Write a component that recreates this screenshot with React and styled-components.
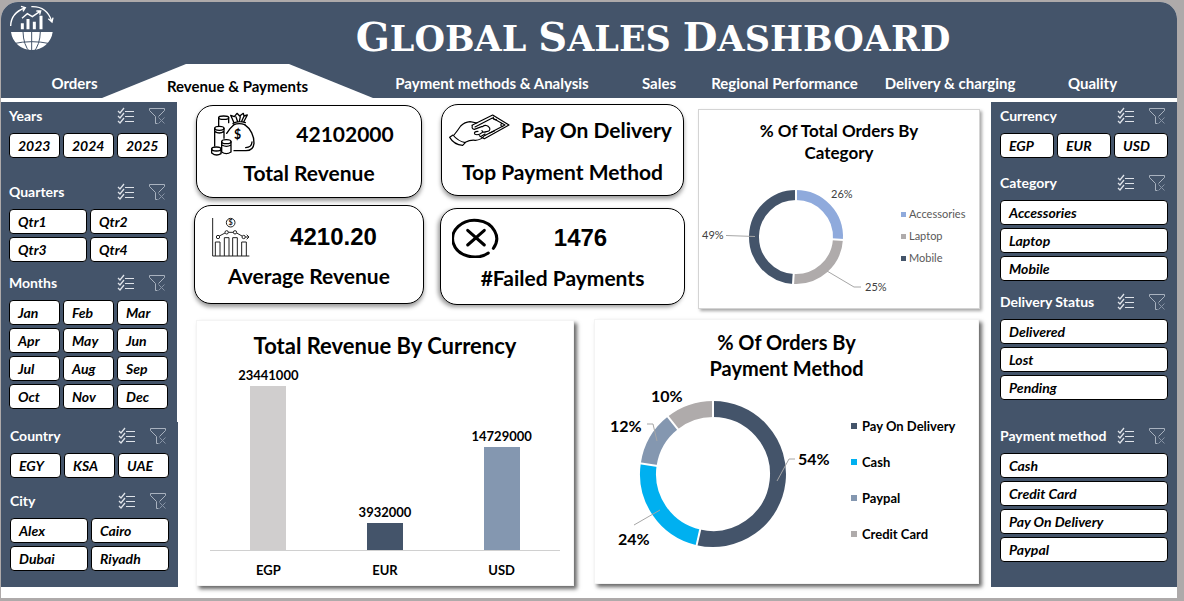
import React from "react";
import styled, { createGlobalStyle } from "styled-components";

const NAVY = "#44546a";

const GlobalStyle = createGlobalStyle`
  * { box-sizing: border-box; }
  body { margin: 0; background: #aeaaaa; font-family: Lato, "Open Sans", sans-serif; color: #000; }
  h1, h2, h3, p, ul, dl, dd, dt { margin: 0; padding: 0; }
  button { font-family: inherit; }
`;

const Page = styled.div`
  padding: 2px 7px 3px 1px;
`;

const Sheet = styled.div`
  background: #fff;
  border-radius: 17px 17px 0 0;
  overflow: hidden;
`;

/* ---------- header ---------- */

const Header = styled.header`
  background: ${NAVY};
  color: #fff;
`;

const TitleBar = styled.div`
  display: flex;
  height: 62px;
`;

const Brand = styled.div`
  width: 128px;
  padding: 3px 0 0 8px;
  svg { display: block; }
`;

const Title = styled.h1`
  flex: 1;
  display: flex;
  justify-content: center;
  gap: 12px;
  padding-top: 11px;
  font: bold 35px/48px "DejaVu Serif", serif;
  text-transform: uppercase;
`;

const TitleWord = styled.span`
  display: block;
  &::first-letter { font-size: 40px; }
`;

const Nav = styled.nav`
  display: grid;
  grid-template-columns: 55fr 271fr 238fr 96fr 155fr 176fr 109fr;
  height: 34px;
  padding: 0 30px 0 46px;
`;

const Tab = styled.a`
  display: flex;
  justify-content: center;
  padding-top: ${(p) => (p.$active ? 13 : 10)}px;
  font-size: 15px;
  line-height: 18px;
  font-weight: bold;
  white-space: nowrap;
  text-decoration: none;
  color: ${(p) => (p.$active ? "#000" : "#fff")};
  background: ${(p) => (p.$active ? "#fff" : "transparent")};
  clip-path: ${(p) => (p.$active ? "polygon(31% 0, 69% 0, 100% 100%, 0 100%)" : "none")};
`;

/* ---------- body ---------- */

const Body = styled.div`
  display: grid;
  grid-template-columns: 177px 1fr 186px;
  padding-bottom: 11px;
`;

const Sidebar = styled.aside`
  display: flex;
  flex-direction: column;
  padding-top: 4px;
`;

const Panel = styled.div`
  flex: ${(p) => (p.$grow ? 1 : "none")};
  margin-right: ${(p) => p.$edge || 0}px;
  padding: ${(p) => p.$pad};
  background: ${NAVY};
`;

const SlicerBox = styled.section`
  margin-top: ${(p) => p.$space}px;
`;

const SlicerHead = styled.div`
  display: flex;
  align-items: center;
  height: 28px;
  margin-bottom: 3px;
  padding-right: 2px;
  color: #fff;
`;

const SlicerTitle = styled.h2`
  flex: 1;
  font-size: 14px;
  line-height: 18px;
  font-weight: bold;
  white-space: nowrap;
`;

const IconButton = styled.button`
  display: block;
  width: 18px;
  height: 18px;
  padding: 0;
  margin-left: ${(p) => p.$space || 0}px;
  border: 0;
  background: none;
  svg { display: block; }
`;

const Options = styled.div`
  display: grid;
  grid-template-columns: repeat(${(p) => p.$cols}, 1fr);
  gap: 3px;
`;

const Option = styled.button`
  height: 25px;
  padding: 0 0 0 8px;
  border: 1px solid #000;
  border-radius: 4px;
  background: #fff;
  color: #000;
  font-size: 14px;
  line-height: 18px;
  font-weight: bold;
  font-style: italic;
  text-align: left;
  white-space: nowrap;
`;

const Main = styled.main`
  padding: 6px 11px 0 16px;
`;

const TopRow = styled.div`
  display: grid;
  grid-template-columns: 233fr 245fr 282fr;
  column-gap: 13px;
  align-items: start;
`;

const KpiColumn = styled.div`
  display: grid;
  gap: ${(p) => p.$gap}px;
  padding: ${(p) => p.$pad};
`;

const KpiCard = styled.section`
  height: ${(p) => p.$height}px;
  margin: 0 ${(p) => p.$inset || 0}px;
  padding-top: ${(p) => p.$top}px;
  border: 1px solid #000;
  border-radius: 17px;
  background: #fff;
  box-shadow: ${(p) => (p.$left ? "-2px 2px 4px" : "0 3px 4px")} rgba(0, 0, 0, 0.4);
`;

const KpiRow = styled.div`
  display: flex;
  align-items: center;
  gap: ${(p) => p.$gap || 0}px;
  height: 44px;
  padding: ${(p) => p.$pad};
  svg { flex: none; display: block; }
`;

const KpiValue = styled.p`
  flex: 1;
  text-align: center;
  font-size: ${(p) => (p.$kind === "arial" ? 24 : 21)}px;
  font-family: ${(p) => (p.$kind === "arial" ? '"Liberation Sans", sans-serif' : "inherit")};
  line-height: 28px;
  font-weight: bold;
  white-space: nowrap;
`;

const KpiLabel = styled.h2`
  margin-top: ${(p) => p.$space}px;
  text-align: center;
  font-size: 21px;
  line-height: 24px;
  font-weight: bold;
  white-space: nowrap;
`;

const ChartCard = styled.section`
  height: ${(p) => p.$height}px;
  margin-top: ${(p) => p.$space || 0}px;
  padding-top: ${(p) => p.$top}px;
  border: 1px solid ${(p) => (p.$line ? "#d4d4d4" : "#f4f4f4")};
  background: #fff;
  box-shadow: ${(p) => (p.$line ? "2px 2px 3px rgba(0,0,0,.35)" : "3px 3px 4px rgba(0,0,0,.6)")};
`;

const ChartTitle = styled.h2`
  text-align: center;
  font-size: ${(p) => p.$size}px;
  line-height: ${(p) => p.$line}px;
  font-weight: bold;
`;

const Plot = styled.div`
  display: flex;
  svg { flex: none; display: block; font-family: Lato, sans-serif; }
`;

const Legend = styled.ul`
  list-style: none;
  padding-top: ${(p) => p.$top}px;
  color: ${(p) => (p.$strong ? "#000" : "#595959")};
  font-size: ${(p) => (p.$strong ? 13 : 11)}px;
  font-weight: ${(p) => (p.$strong ? "bold" : "normal")};
  line-height: ${(p) => p.$line}px;
`;

const LegendItem = styled.li`
  display: flex;
  align-items: center;
  gap: ${(p) => (p.$strong ? 5 : 3)}px;
  white-space: nowrap;
  &::before {
    content: "";
    width: ${(p) => (p.$strong ? 6 : 5)}px;
    height: ${(p) => (p.$strong ? 6 : 5)}px;
    background: ${(p) => p.$color};
  }
`;

const BottomRow = styled.div`
  display: grid;
  grid-template-columns: 378fr 385fr;
  column-gap: 20px;
  padding: 0 1px 0 2px;
  margin-top: 10px;
  align-items: start;
`;

const Bars = styled.div`
  display: grid;
  grid-template-columns: repeat(3, 1fr);
  height: 191px;
  margin: 0 13px;
  border-bottom: 1px solid #d0d0d0;
`;

const BarColumn = styled.div`
  display: flex;
  flex-direction: column;
  align-items: center;
  justify-content: flex-end;
  font-size: 13px;
  line-height: 18px;
  font-weight: bold;
`;

const Bar = styled.div`
  width: 36px;
  margin-top: 2px;
  background: ${(p) => p.$color};
`;

const BarNames = styled.div`
  display: grid;
  grid-template-columns: repeat(3, 1fr);
  margin: 10px 13px 0;
  text-align: center;
  font-size: 13px;
  line-height: 18px;
  font-weight: bold;
`;

/* ---------- drawings ---------- */

const GlobeLogo = () => (
  <svg width="46" height="48" viewBox="27 15 138 144" fill="none" stroke="#fff" strokeWidth="4">
    <path d="M33 96H158A63 62 0 0 1 33 96Z" fill="#fff" stroke="none" />
    <path d="M95 95V158M69 95Q70 135 90 157M121 95Q120 135 100 157M40 131Q95 119 150 131" stroke={NAVY} strokeWidth="3" />
    <path d="M67 88V70M84 88V57M103 88V65M123 88V47" strokeWidth="9" />
    <path d="M66 55L82 41L97 50L119 35M109 33L122 33L119 44" />
    <path d="M32 78Q33 39 74 24M63 19L76 23L69 34M94 20Q140 18 155 63M145 56L156 66L159 53" />
  </svg>
);

const SelectIcon = () => (
  <svg width="18" height="18" viewBox="0 0 18 18" fill="none" stroke="#dfe3e9" strokeWidth="1">
    <path d="M1 4L3 6L7 1M1 9L3 11L7 6M1 14L3 16L7 11" strokeWidth="1.300" />
    <path d="M8 4.500H17M8 9.500H17M8 14.500H17" />
  </svg>
);

const ClearIcon = () => (
  <svg width="18" height="18" viewBox="0 0 18 18" fill="none" stroke="#a9b2bf" strokeWidth="1">
    <path d="M1.500 1.500H16.500V3.500L10.500 9.500M1.500 1.500V3.500L7.500 9.500V16.500H9.500" />
    <path d="M10.500 10.500L16.500 16.500M16.500 10.500L10.500 16.500" stroke="#8793a5" />
  </svg>
);

const MoneyBagIcon = () => (
  <svg width="44" height="44" viewBox="65 34 132 132" fill="none" stroke="#000" strokeWidth="4" strokeLinecap="round" strokeLinejoin="round">
    <ellipse cx="103" cy="51" rx="15" ry="5" />
    <path d="M88 51V75M118 51V66" />
    <ellipse cx="90" cy="83" rx="14" ry="6" />
    <path d="M76 83V136M104 83V113M76 92Q90 102 104 92" />
    <ellipse cx="111" cy="123" rx="14" ry="6" />
    <path d="M97 123V154Q111 164 125 154V123M98 133Q111 141 125 133" />
    <ellipse cx="81" cy="145" rx="14" ry="6" />
    <path d="M67 145V157Q81 168 95 159V145" />
    <path d="M133 73Q120 84 112 98M166 72C184 84 195 107 194 128Q192 150 170 150H134" />
    <path d="M131 68Q148 59 168 66M132 73Q149 65 166 72M134 66L124 44L135 48L143 38L151 46L162 38L164 46L174 43L163 64M140 49L145 63M153 48L150 62M164 47L157 62" />
    <path d="M188 124Q187 140 169 141" />
    <text x="145" y="116" textAnchor="middle" fontFamily="Lato" fontSize="37" fill="#000" stroke="none" fontWeight="bold">$</text>
  </svg>
);

const TrendIcon = () => (
  <svg width="38" height="40" viewBox="65 350 114 120" fill="none" stroke="#222" strokeWidth="3">
    <path d="M67 353V467H177M75 467V425H89V467M102 467V412H116V467M127 467V412H141V467M154 467V425H168V467" />
    <circle cx="83" cy="410" r="5" />
    <circle cx="109" cy="396" r="5" />
    <circle cx="134" cy="396" r="5" />
    <circle cx="160" cy="410" r="5" />
    <path d="M87 407L104 398M114 396H129M139 398L155 407M165 410H175M169 403L176 410L169 417" />
    <circle cx="121" cy="367" r="13" />
    <text x="121" y="375" textAnchor="middle" fontFamily="Lato" fontSize="22" fill="#222" stroke="none" fontWeight="bold">$</text>
  </svg>
);

const HandCashIcon = () => (
  <svg width="61" height="33" viewBox="41 38 183 99" fill="none" stroke="#000" strokeWidth="3.500" strokeLinejoin="round" strokeLinecap="round">
    <path d="M43 108L53 101Q67 119 90 124L82 132Q56 130 43 108Z" />
    <path d="M56 101Q68 86 76 74Q88 62 104 61L125 65M90 123Q105 115 120 117Q138 116 149 101" />
    <path d="M110 72L172 41L221 71L147 112L132 103M119 77L171 50L209 71L150 102" />
    <path d="M111 73Q108 83 117 84L139 76M128 90Q113 91 119 99Q129 103 141 93M141 76Q154 67 163 80Q166 90 153 91Q142 95 140 88M174 47Q173 57 183 54M199 66Q193 73 202 76M163 95L177 89M139 104L149 98" />
  </svg>
);

const FailedIcon = () => (
  <svg width="48" height="40" viewBox="48 356 144 120" fill="none" stroke="#000" strokeWidth="9" strokeLinecap="round">
    <path d="M157 461A66 55 0 1 1 172 447" />
    <path d="M95 393L145 437M145 393L95 437" />
  </svg>
);

const point = (cx, cy, r, share) => {
  const a = share * 2 * Math.PI;
  return [cx + r * Math.sin(a), cy - r * Math.cos(a)];
};

function Ring({ cx, cy, inner, outer, slices }) {
  let total = 0;
  const mid = (inner + outer) / 2;
  const parts = slices.map((s) => {
    const from = total;
    total += s.share;
    return { ...s, from, to: total };
  });
  return (
    <g fill="none">
      {parts.map((s) => (
        <path
          key={s.name}
          d={`M${point(cx, cy, mid, s.from)}A${mid} ${mid} 0 ${s.share > 0.5 ? 1 : 0} 1 ${point(cx, cy, mid, s.to)}`}
          stroke={s.color}
          strokeWidth={outer - inner}
        />
      ))}
      {parts.map((s) => (
        <path
          key={s.name}
          d={`M${point(cx, cy, inner - 1, s.from)}L${point(cx, cy, outer + 1, s.from)}`}
          stroke="#fff"
          strokeWidth="2"
        />
      ))}
    </g>
  );
}

/* ---------- data ---------- */

const tabs = [
  "Orders",
  "Revenue & Payments",
  "Payment methods & Analysis",
  "Sales",
  "Regional Performance",
  "Delivery & charging",
  "Quality",
];

const categories = [
  { name: "Accessories", share: 0.26, color: "#8faadc" },
  { name: "Laptop", share: 0.25, color: "#afabab" },
  { name: "Mobile", share: 0.49, color: NAVY },
];

const methods = [
  { name: "Pay On Delivery", share: 0.536, color: NAVY },
  { name: "Cash", share: 0.237, color: "#00b0f0" },
  { name: "Paypal", share: 0.121, color: "#8497b0" },
  { name: "Credit Card", share: 0.106, color: "#afabab" },
];

const revenue = [
  { name: "EGP", value: 23441000, color: "#d0cece" },
  { name: "EUR", value: 3932000, color: NAVY },
  { name: "USD", value: 14729000, color: "#8497b0" },
];

const months = ["Jan", "Feb", "Mar", "Apr", "May", "Jun", "Jul", "Aug", "Sep", "Oct", "Nov", "Dec"];

function Slicer({ title, items, cols, space = 0 }) {
  return (
    <SlicerBox $space={space} aria-label={title}>
      <SlicerHead>
        <SlicerTitle>{title}</SlicerTitle>
        <IconButton aria-label={`Multi-select ${title}`}><SelectIcon /></IconButton>
        <IconButton $space={13} aria-label={`Clear ${title} filter`}><ClearIcon /></IconButton>
      </SlicerHead>
      <Options $cols={cols}>
        {items.map((item) => <Option key={item}>{item}</Option>)}
      </Options>
    </SlicerBox>
  );
}

export default function App() {
  return (
    <Page>
      <GlobalStyle />
      <Sheet>
        <Header>
          <TitleBar>
            <Brand><GlobeLogo /></Brand>
            <Title>
              <TitleWord>Global</TitleWord>
              <TitleWord>Sales</TitleWord>
              <TitleWord>Dashboard</TitleWord>
            </Title>
          </TitleBar>
          <Nav>
            {tabs.map((tab, i) => (
              <Tab key={tab} href="#" $active={i === 1}>{tab}</Tab>
            ))}
          </Nav>
        </Header>
        <Body>
          <Sidebar>
            <Panel $edge={1} $pad="0 9px 13px 8px">
              <Slicer title="Years" cols={3} items={["2023", "2024", "2025"]} />
              <Slicer title="Quarters" cols={2} space={20} items={["Qtr1", "Qtr2", "Qtr3", "Qtr4"]} />
              <Slicer title="Months" cols={3} space={7} items={months} />
            </Panel>
            <Panel $grow $pad="0 9px 16px 9px">
              <Slicer title="Country" cols={3} items={["EGY", "KSA", "UAE"]} />
              <Slicer title="City" cols={2} space={9} items={["Alex", "Cairo", "Dubai", "Riyadh"]} />
            </Panel>
          </Sidebar>

          <Main>
            <TopRow>
              <KpiColumn $gap={7} $pad="1px 3px 0 0">
                <KpiCard $height={93} $inset={2} $top={6}>
                  <KpiRow $gap={14} $pad="0 0 0 14px">
                    <MoneyBagIcon />
                    <KpiValue>42102000</KpiValue>
                  </KpiRow>
                  <KpiLabel $space={5}>Total Revenue</KpiLabel>
                </KpiCard>
                <KpiCard $height={99} $top={9}>
                  <KpiRow $pad="0 6px 0 17px">
                    <TrendIcon />
                    <KpiValue $kind="arial">4210.20</KpiValue>
                  </KpiRow>
                  <KpiLabel $space={5}>Average Revenue</KpiLabel>
                </KpiCard>
              </KpiColumn>
              <KpiColumn $gap={12} $pad="0">
                <KpiCard $height={92} $inset={1} $top={3}>
                  <KpiRow $pad="0 0 0 7px">
                    <HandCashIcon />
                    <KpiValue>Pay On Delivery</KpiValue>
                  </KpiRow>
                  <KpiLabel $space={8}>Top Payment Method</KpiLabel>
                </KpiCard>
                <KpiCard $height={97} $top={7} $left>
                  <KpiRow $pad="0 23px 0 11px">
                    <FailedIcon />
                    <KpiValue $kind="arial">1476</KpiValue>
                  </KpiRow>
                  <KpiLabel $space={6}>#Failed Payments</KpiLabel>
                </KpiCard>
              </KpiColumn>
              <ChartCard $height={200} $space={5} $top={10} $line>
                <ChartTitle $size={17} $line={22}>% Of Total Orders By<br />Category</ChartTitle>
                <Plot>
                  <svg width="202" height="140" viewBox="699 164 202 140" fontSize="11" fill="#404040">
                    <Ring cx={796} cy={237} inner={37} outer={47} slices={categories} />
                    <path d="M726 235.500L755 236.500M827 271L854 287H861" fill="none" stroke="#a6a6a6" />
                    <text x="831" y="198">26%</text>
                    <text x="702" y="239">49%</text>
                    <text x="865" y="291">25%</text>
                  </svg>
                  <Legend $top={39} $line={22}>
                    {categories.map((c) => <LegendItem key={c.name} $color={c.color}>{c.name}</LegendItem>)}
                  </Legend>
                </Plot>
              </ChartCard>
            </TopRow>

            <BottomRow>
              <ChartCard $height={266} $space={1} $top={11}>
                <ChartTitle $size={22} $line={28}>Total Revenue By Currency</ChartTitle>
                <Bars>
                  {revenue.map((r) => (
                    <BarColumn key={r.name}>
                      {r.value}
                      <Bar $color={r.color} style={{ height: Math.round(r.value / 143000) }} />
                    </BarColumn>
                  ))}
                </Bars>
                <BarNames>
                  {revenue.map((r) => <span key={r.name}>{r.name}</span>)}
                </BarNames>
              </ChartCard>
              <ChartCard $height={265} $top={9}>
                <ChartTitle $size={20} $line={26}>% Of Orders By<br />Payment Method</ChartTitle>
                <Plot>
                  <svg width="256" height="180" viewBox="596 381 256 180" fontSize="16" fontWeight="bold">
                    <Ring cx={714} cy={474} inner={57} outer={73} slices={methods} />
                    <path d="M778 481L790 459H796M661 510L635 525M658 441L654 424H648" fill="none" stroke="#a6a6a6" />
                    <text x="799" y="465">54%</text>
                    <text x="619" y="545">24%</text>
                    <text x="611" y="432">12%</text>
                    <text x="652" y="402">10%</text>
                  </svg>
                  <Legend $strong $top={27} $line={36}>
                    {methods.map((m) => <LegendItem key={m.name} $strong $color={m.color}>{m.name}</LegendItem>)}
                  </Legend>
                </Plot>
              </ChartCard>
            </BottomRow>
          </Main>

          <Sidebar>
            <Panel $grow $pad="0 9px 25px 9px">
              <Slicer title="Currency" cols={3} items={["EGP", "EUR", "USD"]} />
              <Slicer title="Category" cols={1} space={11} items={["Accessories", "Laptop", "Mobile"]} />
              <Slicer title="Delivery Status" cols={1} space={7} items={["Delivered", "Lost", "Pending"]} />
              <Slicer title="Payment method" cols={1} space={22} items={["Cash", "Credit Card", "Pay On Delivery", "Paypal"]} />
            </Panel>
          </Sidebar>
        </Body>
      </Sheet>
    </Page>
  );
}
